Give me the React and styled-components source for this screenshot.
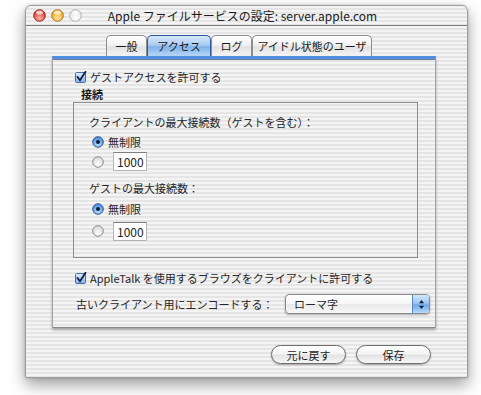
import React from 'react'
import styled, { createGlobalStyle } from 'styled-components'

const GlobalStyle = createGlobalStyle`
  html, body {
    margin: 0;
    padding: 0;
    background: #ffffff;
  }
  body {
    font-family: "Noto Sans CJK JP", "Noto Sans", sans-serif;
    color: #262626;
    -webkit-font-smoothing: antialiased;
  }
`

const stripes = `repeating-linear-gradient(
  to bottom,
  #f4f4f4 0px,
  #f4f4f4 2px,
  #e5e5e5 2px,
  #e5e5e5 4px
)`

const Page = styled.div`
  width: 481px;
  height: 395px;
  padding: 5px 0 0 25px;
  box-sizing: border-box;
  overflow: hidden;
`

const Window = styled.div`
  width: 443px;
  height: 373px;
  box-sizing: border-box;
  border: 1px solid #9c9c9c;
  border-radius: 6px 6px 0 0;
  background: ${stripes};
  box-shadow: 0 7px 16px rgba(0, 0, 0, 0.38), 0 0 3px rgba(0, 0, 0, 0.2);
  display: flex;
  flex-direction: column;
`

const TitleBar = styled.div`
  height: 19px;
  border-bottom: 1px solid #7c7c7c;
  display: grid;
  grid-template-columns: 1fr auto 1fr;
  align-items: center;
  border-radius: 6px 6px 0 0;
`

const Lights = styled.div`
  display: flex;
  gap: 5px;
  padding-left: 7px;
  align-items: center;
`

const Title = styled.div`
  font-size: 12px;
  line-height: 19px;
  color: #1a1a1a;
  white-space: nowrap;
  margin-left: -8px;
`

const Body = styled.div`
  padding: 9px 0 0 26px;
  display: flex;
  flex-direction: column;
`

const Tabs = styled.div`
  display: flex;
  height: 21px;
  margin-left: 54px;
`

const Tab = styled.div`
  width: ${(p) => p.$w}px;
  box-sizing: border-box;
  height: 21px;
  display: flex;
  align-items: center;
  justify-content: center;
  font-size: 11px;
  color: #1a1a1a;
  white-space: nowrap;
  border: 1px solid ${(p) => (p.$active ? '#2e5a9c' : '#8e8e8e')};
  border-bottom: none;
  border-radius: 5px 5px 0 0;
  background: ${(p) =>
    p.$active
      ? 'linear-gradient(to bottom, #d7e8fb 0%, #a9cdf3 45%, #7fb2ea 55%, #b7d8f8 100%)'
      : 'linear-gradient(to bottom, #ffffff 0%, #f2f2f2 45%, #e2e2e2 55%, #f4f4f4 100%)'};
`

const Pane = styled.div`
  width: 384px;
  height: 272px;
  box-sizing: border-box;
  border-top: 3px solid #4f8ee0;
  border-left: 1px solid #a2a2a2;
  border-right: 1px solid #a2a2a2;
  border-bottom: 1px solid #8a8a8a;
  box-shadow: inset 0 1px 0 #6f7f99, 0 2px 3px rgba(0, 0, 0, 0.3);
  padding: 8px 5px 0 22px;
  display: flex;
  flex-direction: column;
`

const Row = styled.div`
  display: flex;
  align-items: center;
  height: ${(p) => p.$h || 20}px;
  margin-top: ${(p) => p.$mt || 0}px;
  margin-left: ${(p) => p.$ml || 0}px;
  font-size: 11px;
  white-space: nowrap;
`

const GroupLabel = styled.div`
  font-size: 11px;
  font-weight: 700;
  line-height: 15px;
  height: 15px;
  margin-left: 6px;
  color: #1a1a1a;
`

const GroupBox = styled.div`
  width: 345px;
  height: 156px;
  box-sizing: border-box;
  margin-left: -2px;
  border: 1px solid #8c8c8c;
  padding: 9px 0 0 15px;
  display: flex;
  flex-direction: column;
`

const Label = styled.span`
  margin-left: ${(p) => p.$gap || 0}px;
`

const Field = styled.div`
  width: 34px;
  height: 19px;
  box-sizing: border-box;
  margin-left: 9px;
  background: #ffffff;
  border: 1px solid #b4b4b4;
  border-top-color: #7e7e7e;
  font-size: 12px;
  line-height: 17px;
  padding-left: 3px;
  color: #222;
`

const Popup = styled.div`
  margin-left: auto;
  width: 145px;
  height: 20px;
  box-sizing: border-box;
  border: 1px solid #8a8a8a;
  border-radius: 4px;
  display: flex;
  overflow: hidden;
  box-shadow: 0 1px 2px rgba(0, 0, 0, 0.3);
  background: linear-gradient(to bottom, #ffffff 0%, #f6f6f6 50%, #e9e9e9 51%, #f7f7f7 100%);
`

const PopupText = styled.div`
  flex: 1;
  font-size: 11px;
  line-height: 18px;
  padding-left: 8px;
`

const PopupArrows = styled.div`
  width: 16px;
  border-left: 1px solid #5a86c2;
  background: linear-gradient(to bottom, #d3e6fb 0%, #9ec7f2 45%, #6fa7e8 55%, #b8dafb 100%);
  display: flex;
  align-items: center;
  justify-content: center;
`

const ButtonRow = styled.div`
  display: flex;
  justify-content: flex-end;
  gap: 10px;
  margin-top: 17px;
  padding-right: 5px;
  width: 384px;
  box-sizing: border-box;
`

const Button = styled.div`
  width: 75px;
  height: 19px;
  box-sizing: border-box;
  border: 1px solid #6e6e6e;
  border-radius: 10px;
  background: linear-gradient(to bottom, #ffffff 0%, #f4f4f4 45%, #e4e4e4 55%, #f6f6f6 100%);
  box-shadow: 0 1px 2px rgba(0, 0, 0, 0.3);
  display: flex;
  align-items: center;
  justify-content: center;
  font-size: 11px;
  color: #1a1a1a;
`

const Light = ({ kind }) => {
  const colors = {
    close: ['#f7b2a8', '#d8382c', '#8f1a12'],
    min: ['#fde3a4', '#f3a81a', '#a3650a'],
    zoom: ['#ffffff', '#e4e4e4', '#a8a8a8'],
  }[kind]
  const id = `lg-${kind}`
  return (
    <svg width="13" height="13" viewBox="0 0 13 13">
      <defs>
        <radialGradient id={id} cx="0.5" cy="0.75" r="0.65">
          <stop offset="0" stopColor={colors[0]} />
          <stop offset="1" stopColor={colors[1]} />
        </radialGradient>
      </defs>
      <circle cx="6.5" cy="6.5" r="5.8" fill={`url(#${id})`} stroke={colors[2]} strokeWidth="0.9" />
      <ellipse cx="6.5" cy="3.6" rx="3.4" ry="2" fill="#ffffff" opacity="0.7" />
    </svg>
  )
}

const Checkbox = () => (
  <svg width="12" height="12" viewBox="0 0 12 12">
    <defs>
      <linearGradient id="cbg" x1="0" y1="0" x2="0" y2="1">
        <stop offset="0" stopColor="#e4f0fd" />
        <stop offset="1" stopColor="#7fb0ea" />
      </linearGradient>
    </defs>
    <rect x="0.5" y="1.5" width="10" height="10" rx="1" fill="url(#cbg)" stroke="#476c9e" />
    <path d="M2.5 6 L5 9.2 L10.5 0.8" fill="none" stroke="#0c1f45" strokeWidth="1.8" strokeLinecap="round" />
  </svg>
)

const Radio = ({ on }) => (
  <svg width="12" height="12" viewBox="0 0 12 12">
    <defs>
      <radialGradient id="rOn" cx="0.5" cy="0.7" r="0.6">
        <stop offset="0" stopColor="#bfe0fd" />
        <stop offset="1" stopColor="#4c8ee0" />
      </radialGradient>
      <radialGradient id="rOff" cx="0.5" cy="0.7" r="0.6">
        <stop offset="0" stopColor="#ffffff" />
        <stop offset="1" stopColor="#dadada" />
      </radialGradient>
    </defs>
    <circle cx="6" cy="6" r="5.3" fill={on ? 'url(#rOn)' : 'url(#rOff)'} stroke={on ? '#355a93' : '#8e8e8e'} />
    {on && <circle cx="6" cy="6" r="2" fill="#0d1c38" />}
  </svg>
)

const StepArrows = () => (
  <svg width="7" height="11" viewBox="0 0 7 11">
    <path d="M3.5 1 L6 4.3 L1 4.3 Z" fill="#0d1c38" />
    <path d="M3.5 10 L6 6.7 L1 6.7 Z" fill="#0d1c38" />
  </svg>
)

export default function App() {
  return (
    <Page>
      <GlobalStyle />
      <Window>
        <TitleBar>
          <Lights>
            <Light kind="close" />
            <Light kind="min" />
            <Light kind="zoom" />
          </Lights>
          <Title>Apple ファイルサービスの設定: server.apple.com</Title>
          <div />
        </TitleBar>
        <Body>
          <Tabs>
            <Tab $w={41}>一般</Tab>
            <Tab $w={64} $active>アクセス</Tab>
            <Tab $w={41}>ログ</Tab>
            <Tab $w={120}>アイドル状態のユーザ</Tab>
          </Tabs>
          <Pane>
            <Row>
              <Checkbox />
              <Label $gap={3}>ゲストアクセスを許可する</Label>
            </Row>
            <GroupLabel>接続</GroupLabel>
            <GroupBox>
              <Row>クライアントの最大接続数（ゲストを含む）：</Row>
              <Row $ml={3}>
                <Radio on />
                <Label $gap={4}>無制限</Label>
              </Row>
              <Row $ml={3} $h={19}>
                <Radio />
                <Field>1000</Field>
              </Row>
              <Row $mt={7}>ゲストの最大接続数：</Row>
              <Row $ml={3} $h={21}>
                <Radio on />
                <Label $gap={4}>無制限</Label>
              </Row>
              <Row $ml={3} $h={24}>
                <Radio />
                <Field>1000</Field>
              </Row>
            </GroupBox>
            <Row $mt={10}>
              <Checkbox />
              <Label $gap={3}>AppleTalk を使用するブラウズをクライアントに許可する</Label>
            </Row>
            <Row $mt={6} $ml={1}>
              <Label>古いクライアント用にエンコードする：</Label>
              <Popup>
                <PopupText>ローマ字</PopupText>
                <PopupArrows>
                  <StepArrows />
                </PopupArrows>
              </Popup>
            </Row>
          </Pane>
          <ButtonRow>
            <Button>元に戻す</Button>
            <Button>保存</Button>
          </ButtonRow>
        </Body>
      </Window>
    </Page>
  )
}
